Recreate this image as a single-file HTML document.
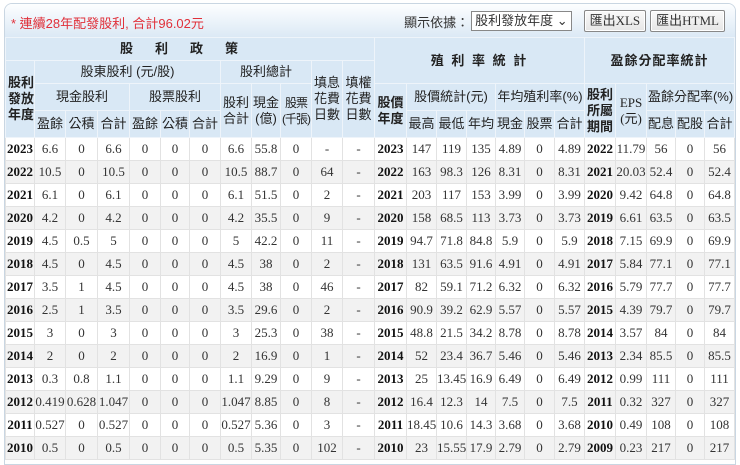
<!DOCTYPE html>
<html><head><meta charset="utf-8"><style>
body{margin:0;background:#fff;width:740px;height:460px;overflow:hidden;font-family:"Liberation Serif","Noto Sans CJK TC",serif;}
.wrap{position:absolute;left:4px;top:3px;width:730px;height:460px;border:1px solid #c9d6e2;border-radius:8px 8px 0 0;overflow:hidden;}
.bar{height:33px;background:linear-gradient(#fdfeff,#dce9f5);position:relative;border-bottom:1px solid #c9d8e6;}
.note{position:absolute;left:6px;top:9px;color:#e0303a;font-size:13px;font-family:"Liberation Sans","Noto Sans CJK TC",sans-serif;}
.ctl{position:absolute;right:10px;top:6px;font-size:13px;color:#333;font-family:"Liberation Sans","Noto Sans CJK TC",sans-serif;display:flex;align-items:center;}
.sel{border:1px solid #888;background:#fff;height:18px;padding:0 3px;margin:0 8px 0 2px;font-size:13px;line-height:18px}
.btn{border:1px solid #888;border-radius:2px;background:linear-gradient(#fafafa,#e6e6e6);height:20px;line-height:20px;padding:0 5px;margin-left:4px;font-family:"Liberation Serif","Noto Sans CJK TC",serif;font-size:13px;box-shadow:0 0 0 1px #fff inset}
table{border-collapse:collapse;table-layout:fixed;position:absolute;left:0;top:33px;width:729px;}
th{background:#d9e8f5;border:1px solid #eef4fa;font-weight:normal;font-size:13px;color:#222;font-family:"Liberation Sans","Noto Sans CJK TC",sans-serif;padding:0;line-height:16px;}
th.b{font-weight:bold;letter-spacing:2px}
td{border:1px solid #e2e2e2;height:22px;padding:0;text-align:center;font-size:13px;color:#333;}
tr:nth-child(even) td{background:#f2f2f2}
td.y{font-weight:bold;color:#111;}
</style></head><body>
<div class="wrap">
<div class="bar"><span class="note">* 連續28年配發股利, 合計96.02元</span>
<div class="ctl">顯示依據：<span class="sel">股利發放年度 ⌄</span><span class="btn">匯出XLS</span><span class="btn">匯出HTML</span></div></div>
<table>
<colgroup>
<col style="width:29px"><col style="width:31px"><col style="width:32px"><col style="width:32px"><col style="width:31px"><col style="width:29px"><col style="width:31px"><col style="width:31px"><col style="width:29px"><col style="width:31px"><col style="width:31px"><col style="width:32px">
<col style="width:32px"><col style="width:30px"><col style="width:30px"><col style="width:29px"><col style="width:29px"><col style="width:30px"><col style="width:30px"><col style="width:31px"><col style="width:31px"><col style="width:29px"><col style="width:29px"><col style="width:30px">
</colgroup>
<tr style="height:23px"><th colspan="12" class="b" style="letter-spacing:22px">股利政策</th><th colspan="7" rowspan="2" class="b">殖 利 率 統 計</th><th colspan="5" rowspan="2" class="b" style="letter-spacing:1px">盈餘分配率統計</th></tr>
<tr style="height:23px"><th rowspan="3" class="b" style="letter-spacing:0;text-align:left;padding-left:2px">股利<br>發放<br>年度</th><th colspan="6">股東股利 (元/股)</th><th colspan="3">股利總計</th><th rowspan="3">填息<br>花費<br>日數</th><th rowspan="3">填權<br>花費<br>日數</th></tr>
<tr style="height:27px"><th colspan="3">現金股利</th><th colspan="3">股票股利</th><th rowspan="2">股利<br>合計</th><th rowspan="2">現金<br>(億)</th><th rowspan="2" style="font-size:12px;letter-spacing:-1px">股票<br>(千張)</th><th rowspan="2" class="b" style="letter-spacing:0">股價<br>年度</th><th colspan="3">股價統計(元)</th><th colspan="3">年均殖利率(%)</th><th rowspan="2" class="b" style="letter-spacing:0">股利<br>所屬<br>期間</th><th rowspan="2" style="font-family:'Liberation Serif','Noto Sans CJK TC',serif">EPS<br>(元)</th><th colspan="3">盈餘分配率(%)</th></tr>
<tr style="height:27px"><th>盈餘</th><th>公積</th><th>合計</th><th>盈餘</th><th>公積</th><th>合計</th><th>最高</th><th>最低</th><th>年均</th><th>現金</th><th>股票</th><th>合計</th><th>配息</th><th>配股</th><th>合計</th></tr>
<tr><td class="y">2023</td><td>6.6</td><td>0</td><td>6.6</td><td>0</td><td>0</td><td>0</td><td>6.6</td><td>55.8</td><td>0</td><td>-</td><td>-</td><td class="y">2023</td><td>147</td><td>119</td><td>135</td><td>4.89</td><td>0</td><td>4.89</td><td class="y">2022</td><td>11.79</td><td>56</td><td>0</td><td>56</td></tr>
<tr><td class="y">2022</td><td>10.5</td><td>0</td><td>10.5</td><td>0</td><td>0</td><td>0</td><td>10.5</td><td>88.7</td><td>0</td><td>64</td><td>-</td><td class="y">2022</td><td>163</td><td>98.3</td><td>126</td><td>8.31</td><td>0</td><td>8.31</td><td class="y">2021</td><td>20.03</td><td>52.4</td><td>0</td><td>52.4</td></tr>
<tr><td class="y">2021</td><td>6.1</td><td>0</td><td>6.1</td><td>0</td><td>0</td><td>0</td><td>6.1</td><td>51.5</td><td>0</td><td>2</td><td>-</td><td class="y">2021</td><td>203</td><td>117</td><td>153</td><td>3.99</td><td>0</td><td>3.99</td><td class="y">2020</td><td>9.42</td><td>64.8</td><td>0</td><td>64.8</td></tr>
<tr><td class="y">2020</td><td>4.2</td><td>0</td><td>4.2</td><td>0</td><td>0</td><td>0</td><td>4.2</td><td>35.5</td><td>0</td><td>9</td><td>-</td><td class="y">2020</td><td>158</td><td>68.5</td><td>113</td><td>3.73</td><td>0</td><td>3.73</td><td class="y">2019</td><td>6.61</td><td>63.5</td><td>0</td><td>63.5</td></tr>
<tr><td class="y">2019</td><td>4.5</td><td>0.5</td><td>5</td><td>0</td><td>0</td><td>0</td><td>5</td><td>42.2</td><td>0</td><td>11</td><td>-</td><td class="y">2019</td><td>94.7</td><td>71.8</td><td>84.8</td><td>5.9</td><td>0</td><td>5.9</td><td class="y">2018</td><td>7.15</td><td>69.9</td><td>0</td><td>69.9</td></tr>
<tr><td class="y">2018</td><td>4.5</td><td>0</td><td>4.5</td><td>0</td><td>0</td><td>0</td><td>4.5</td><td>38</td><td>0</td><td>2</td><td>-</td><td class="y">2018</td><td>131</td><td>63.5</td><td>91.6</td><td>4.91</td><td>0</td><td>4.91</td><td class="y">2017</td><td>5.84</td><td>77.1</td><td>0</td><td>77.1</td></tr>
<tr><td class="y">2017</td><td>3.5</td><td>1</td><td>4.5</td><td>0</td><td>0</td><td>0</td><td>4.5</td><td>38</td><td>0</td><td>46</td><td>-</td><td class="y">2017</td><td>82</td><td>59.1</td><td>71.2</td><td>6.32</td><td>0</td><td>6.32</td><td class="y">2016</td><td>5.79</td><td>77.7</td><td>0</td><td>77.7</td></tr>
<tr><td class="y">2016</td><td>2.5</td><td>1</td><td>3.5</td><td>0</td><td>0</td><td>0</td><td>3.5</td><td>29.6</td><td>0</td><td>2</td><td>-</td><td class="y">2016</td><td>90.9</td><td>39.2</td><td>62.9</td><td>5.57</td><td>0</td><td>5.57</td><td class="y">2015</td><td>4.39</td><td>79.7</td><td>0</td><td>79.7</td></tr>
<tr><td class="y">2015</td><td>3</td><td>0</td><td>3</td><td>0</td><td>0</td><td>0</td><td>3</td><td>25.3</td><td>0</td><td>38</td><td>-</td><td class="y">2015</td><td>48.8</td><td>21.5</td><td>34.2</td><td>8.78</td><td>0</td><td>8.78</td><td class="y">2014</td><td>3.57</td><td>84</td><td>0</td><td>84</td></tr>
<tr><td class="y">2014</td><td>2</td><td>0</td><td>2</td><td>0</td><td>0</td><td>0</td><td>2</td><td>16.9</td><td>0</td><td>1</td><td>-</td><td class="y">2014</td><td>52</td><td>23.4</td><td>36.7</td><td>5.46</td><td>0</td><td>5.46</td><td class="y">2013</td><td>2.34</td><td>85.5</td><td>0</td><td>85.5</td></tr>
<tr><td class="y">2013</td><td>0.3</td><td>0.8</td><td>1.1</td><td>0</td><td>0</td><td>0</td><td>1.1</td><td>9.29</td><td>0</td><td>9</td><td>-</td><td class="y">2013</td><td>25</td><td>13.45</td><td>16.9</td><td>6.49</td><td>0</td><td>6.49</td><td class="y">2012</td><td>0.99</td><td>111</td><td>0</td><td>111</td></tr>
<tr><td class="y">2012</td><td>0.419</td><td>0.628</td><td>1.047</td><td>0</td><td>0</td><td>0</td><td>1.047</td><td>8.85</td><td>0</td><td>8</td><td>-</td><td class="y">2012</td><td>16.4</td><td>12.3</td><td>14</td><td>7.5</td><td>0</td><td>7.5</td><td class="y">2011</td><td>0.32</td><td>327</td><td>0</td><td>327</td></tr>
<tr><td class="y">2011</td><td>0.527</td><td>0</td><td>0.527</td><td>0</td><td>0</td><td>0</td><td>0.527</td><td>5.36</td><td>0</td><td>3</td><td>-</td><td class="y">2011</td><td>18.45</td><td>10.6</td><td>14.3</td><td>3.68</td><td>0</td><td>3.68</td><td class="y">2010</td><td>0.49</td><td>108</td><td>0</td><td>108</td></tr>
<tr><td class="y">2010</td><td>0.5</td><td>0</td><td>0.5</td><td>0</td><td>0</td><td>0</td><td>0.5</td><td>5.35</td><td>0</td><td>102</td><td>-</td><td class="y">2010</td><td>23</td><td>15.55</td><td>17.9</td><td>2.79</td><td>0</td><td>2.79</td><td class="y">2009</td><td>0.23</td><td>217</td><td>0</td><td>217</td></tr>
</table>
</div>
</body></html>
